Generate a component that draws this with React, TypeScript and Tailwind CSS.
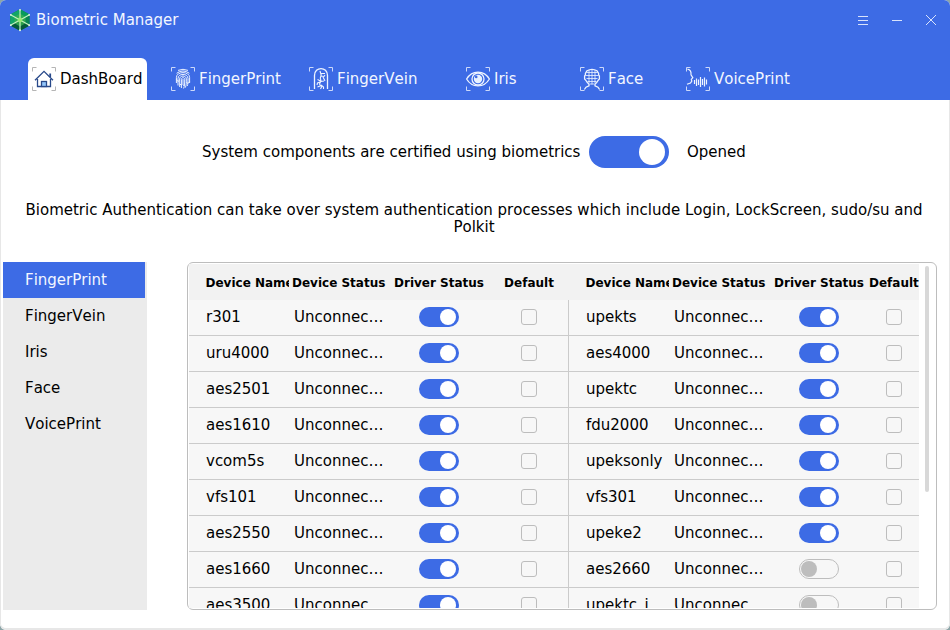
import React from "react";

const TABS = [
  { name: "DashBoard", icon: "home", box: "w-[119px] pl-1 rounded-t-[6px] bg-white text-black" },
  { name: "FingerPrint", icon: "finger", box: "w-[138px] pl-6" },
  { name: "FingerVein", icon: "vein", box: "w-[138px] pl-6" },
  { name: "Iris", icon: "iris", box: "w-[138px] pl-[43px]" },
  { name: "Face", icon: "face", box: "w-[125px] pl-[19px]" },
  { name: "VoicePrint", icon: "voice", box: "w-[138px]" },
];

function Glyph({ kind }: { kind: string }) {
  switch (kind) {
    case "home":
      return (
        <g stroke="#28498a" strokeWidth="1.3">
          <path d="M3 13.2L12 4.3L21 13.2M5.5 12V19.5H18.5V12" />
          <path d="M18.2 6.5V10" strokeWidth="1.8" />
          <rect x="9.5" y="14.5" width="5" height="5" fill="#92c5fa" />
        </g>
      );
    case "finger":
      return (
        <g strokeWidth="1">
          <path d="M7 3.4Q12 1.2 17 3.4M5.6 6.3Q12 1.6 18.4 6.3" />
          <path d="M5.4 16V10.5C5.4 4 18.6 4 18.6 10.5V16" />
          <path d="M7 18.5V11.5C7 6 17 6 17 11.5C17 15 17 17 16.2 19" />
          <path d="M8.7 20V12C8.7 8 15.3 8 15.3 12C15.3 16 15.3 18 14.4 20.6" />
          <path d="M10.4 21V12.5C10.4 10 13.7 10 13.7 12.5C13.7 16 13.6 19 12.6 21.5M12 12V18" />
          <path d="M5.4 12.5L7 14.5L8.7 13M15.3 15L17 16.5L18.6 14.5M8.7 17L10.4 18M12 18.5L14 17.5" />
        </g>
      );
    case "vein":
      return (
        <g strokeWidth="1.3">
          <path d="M5.5 22V8.5C5.5-.8 18.5-.8 18.5 8.5V22" />
          <path d="M11 4L12.2 8L11.3 11L12 14L10.5 17L12.5 20L11.5 22M12 6.5H16M12.2 9L15 9.5L16 8M14 10L16 14M11.5 14L8.5 12.5M11 15L8.5 16L8 18M12 14.5L15 14M11 19L8.5 20M12 18L14.5 20V22" strokeWidth="1.1" />
        </g>
      );
    case "iris":
      return (
        <g strokeWidth="1.3">
          <path d="M.6 12C6 2.8 18 2.8 23.4 12C18 21.2 6 21.2 .6 12Z" />
          <circle cx="12" cy="12" r="6" strokeWidth="1.3" />
          <circle cx="12" cy="12" r="4.2" fill="#e8f2ff" stroke="none" />
          <circle cx="10.2" cy="9.9" r="1.3" fill="#3d6be5" stroke="none" />
        </g>
      );
    case "face":
      return (
        <g strokeWidth="1.3">
          <path d="M5.6 13L4.6 12V9L5.4 8V6.5L7 3.8Q12 .8 17 3.8L18.6 6.5V8L19.4 9V12L18.4 13L17 15.2L15 17.2V18.8L18 20.2L19.6 22.5M5.6 13L7 15.2L9 17.2V18.8L6 20.2L4.4 22.5" />
          <path d="M6.5 5.5H17.5M6 8.5H18M6.5 11.5H17.5M7.5 14.5H16.5M9 3V16M12 2.5V17.5M15 3V16M9.5 17H14.5" strokeWidth=".8" />
        </g>
      );
    default:
      return (
        <g>
          <path d="M1.5 2.2Q5.5 3 5 7.8L6.8 10.7L5.3 12.4L5.8 14.2L4.5 16L1 17.2" strokeWidth="1.2" />
          <path d="M8.5 13V17M10.5 11.5V19M12.5 12.5V18M14.5 10V20M16.5 12V18M18.5 10.5V19.5M20.5 12.5V17.5" strokeWidth="1.2" />
        </g>
      );
  }
}

function FrameIcon({ kind }: { kind: string }) {
  return (
    <svg width="24" height="24" viewBox="0 0 24 24" fill="none" stroke="#eef4ff" className="shrink-0">
      <path d="M.5 4.5V.5H4.5M19.5 .5H23.5V4.5M23.5 19.5V23.5H19.5M4.5 23.5H.5V19.5" stroke={kind === "home" ? "#b5b5b5" : "#ccd9fa"} />
      <Glyph kind={kind} />
    </svg>
  );
}

function Logo() {
  return (
    <svg width="22" height="24" viewBox="0 0 22 24" className="shrink-0">
      <path d="M11 1.2L20.7 6.6V17.4L11 22.8L1.3 17.4V6.6Z" fill="#078552" />
      <path d="M11 1.2L1.3 6.6V17.4L11 12Z" fill="#12a566" />
      <path d="M11 1.2L20.7 6.6L11 12Z" fill="#089a5c" />
      <path d="M1.3 17.4L11 12L20.7 17.4L11 22.8Z" fill="#065a3a" />
      <path d="M11 5.5L16.5 8.7V15.3L11 18.5L5.5 15.3V8.7Z" fill="#38b050" opacity=".8" />
      <path d="M11 1.5V22.5M1.5 6.8L20.5 17.2M1.5 17.2L20.5 6.8" stroke="#c4f0c0" strokeWidth="1.2" />
      <circle cx="11" cy="12" r="2.4" fill="#98e877" />
      <g fill="#e0f8e5"><circle cx="11" cy="1.8" r=".9" /><circle cx="11" cy="22.2" r="1" /><circle cx="1.8" cy="6.8" r=".9" /><circle cx="20.2" cy="6.8" r=".9" /><circle cx="1.8" cy="17.2" r=".9" /><circle cx="20.2" cy="17.2" r=".9" /></g>
    </svg>
  );
}

function Toggle({ on }: { on: boolean }) {
  return on ? (
    <div className="-mt-px flex h-5 w-10 items-center justify-end rounded-full bg-[#3d6be5] pr-[3px]">
      <div className="size-4 rounded-full bg-white" />
    </div>
  ) : (
    <div className="-mt-px flex h-5 w-10 items-center rounded-full border border-[#bdbdbd] pl-px">
      <div className="size-4 rounded-full bg-[#bdbdbd]" />
    </div>
  );
}

const LEFT = ["r301", "uru4000", "aes2501", "aes1610", "vcom5s", "vfs101", "aes2550", "aes1660", "aes3500"];
const RIGHT = ["upekts", "aes4000", "upektc", "fdu2000", "upeksonly", "vfs301", "upeke2", "aes2660", "upektc_i"];

function HeaderCells({ last }: { last?: boolean }) {
  return (
    <>
      <div className="w-[100px] shrink-0 overflow-hidden whitespace-nowrap pl-[16.5px]">Device Name</div>
      <div className="w-[100px] shrink-0 whitespace-nowrap pl-[3px]">Device Status</div>
      <div className="w-[100px] shrink-0 text-center whitespace-nowrap">Driver Status</div>
      <div className={last ? "w-[50px] shrink-0 overflow-hidden" : "w-20 shrink-0 text-center"}>Default</div>
    </>
  );
}

function DeviceCells({ name, on, last }: { name: string; on: boolean; last?: boolean }) {
  return (
    <div className={last ? "flex h-full w-[350px] items-center" : "flex h-full w-[380px] items-center border-r border-[#cbcbcb]"}>
      <div className="w-[100px] shrink-0 pl-[17px] whitespace-nowrap">{name}</div>
      <div className="w-[100px] shrink-0 pl-[5px] whitespace-nowrap">Unconnec…</div>
      <div className="flex w-[100px] shrink-0 justify-center"><Toggle on={on} /></div>
      <div className={last ? "flex w-[50px] shrink-0 justify-center" : "flex w-20 shrink-0 justify-center"}>
        <div className="-mt-px size-4 rounded-[3px] border border-[#bdbdbd]" />
      </div>
    </div>
  );
}

export default function App() {
  return (
    <div className="h-[630px] w-[950px] overflow-hidden bg-[#8ca5a8] font-['DejaVu_Sans',sans-serif] text-[15px] leading-[17px] text-black [font-kerning:none]">
      <div className="flex h-full flex-col overflow-hidden rounded-[6px] bg-white">
        <header className="h-[100px] shrink-0 bg-[#3d6be5] text-[#f2f6ff]">
          <div className="flex h-10 items-center pr-[13px] pl-[9px]">
            <Logo />
            <span className="ml-[5px]">Biometric Manager</span>
            <svg width="80" height="14" viewBox="0 0 80 14" fill="none" stroke="#d9e3fb" className="ml-auto">
              <path d="M1 3.5H11M1 7.5H11M1 11.5H11M35 7.5H45M69 2L79 12M79 2L69 12" />
            </svg>
          </div>
          <nav className="mt-[18px] ml-7 flex h-[42px]">
            {TABS.map((t) => (
              <div key={t.name} className={`flex shrink-0 items-center gap-1 whitespace-nowrap ${t.box}`}>
                <FrameIcon kind={t.icon} />
                <span>{t.name}</span>
              </div>
            ))}
          </nav>
        </header>
        <main className="min-h-0 flex-1 rounded-b-[6px] border-x border-b-2 border-[#e7e7e7]">
          <div className="mt-9 ml-[201px] flex h-8 items-center">
            <span className="w-[387px] whitespace-nowrap">System components are certified using biometrics</span>
            <div className="flex h-8 w-20 items-center justify-end rounded-full bg-[#3d6be5] pr-1">
              <div className="size-[26px] rounded-full bg-white" />
            </div>
            <span className="ml-[18px]">Opened</span>
          </div>
          <p className="mt-[34px] pr-[2px] text-center">
            <span className="whitespace-nowrap">Biometric Authentication can take over system authentication processes which include Login, LockScreen, sudo/su and</span>
            <br />Polkit
          </p>
          <div className="mt-[26px] flex h-[348px]">
            <aside className="ml-[2px] w-36 shrink-0 bg-[#ebebeb]">
              {["FingerPrint", "FingerVein", "Iris", "Face", "VoicePrint"].map((name, i) => (
                <div key={name} className={`flex h-9 w-[142px] items-center pl-[22px] ${i === 0 ? "bg-[#3d6be5] text-[#f2f6ff]" : ""}`}>{name}</div>
              ))}
            </aside>
            <section className="ml-10 flex w-[750px] rounded-[6px] border border-[#bdbdbd] p-px">
              <div className="w-[730px] overflow-hidden bg-[#f7f7f7]">
                <div className="flex h-9 items-center bg-[#f2f2f2] pt-[2px] text-[12px] font-bold">
                  <HeaderCells />
                  <HeaderCells last />
                </div>
                {LEFT.map((name, i) => (
                  <div key={name} className="flex h-9 border-b border-[#cbcbcb]">
                    <DeviceCells name={name} on />
                    <DeviceCells name={RIGHT[i]} on={i < 7} last />
                  </div>
                ))}
              </div>
              <div className="mt-[2px] ml-[6px] h-[226px] w-1 rounded-full bg-[#d8d8d8]" />
            </section>
          </div>
        </main>
      </div>
    </div>
  );
}
